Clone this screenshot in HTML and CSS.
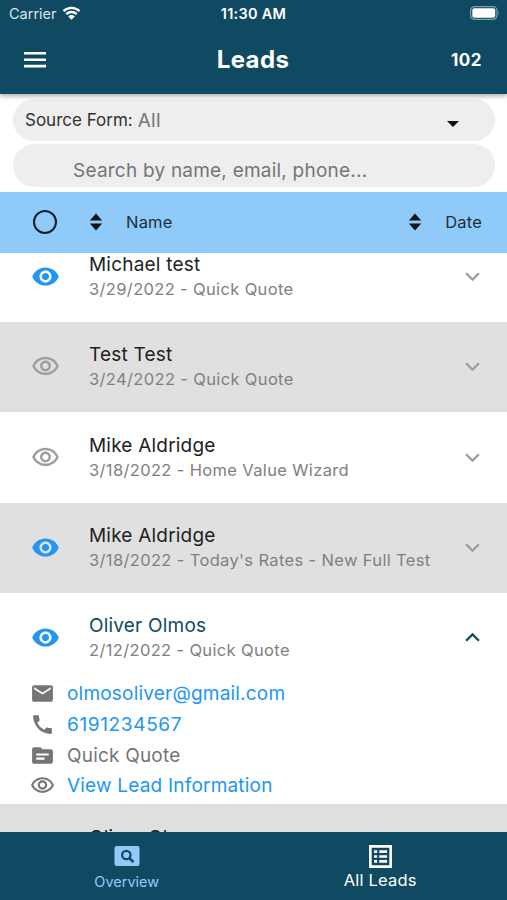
FILE: index.html
```html
<!DOCTYPE html>
<html lang="en">
<head>
    <meta charset="UTF-8">
    <meta name="viewport" content="width=device-width, initial-scale=1.0">
    <title>Leads</title>
    <link rel="stylesheet" href="styles.css">
</head>
<body>
    <!-- shared icon shapes -->
    <svg class="sprite" width="0" height="0">
        <symbol id="eye" viewBox="0 0 24 24"><path d="M12 4.5C7 4.5 2.73 7.61 1 12c1.73 4.39 6 7.5 11 7.5s9.27-3.11 11-7.5c-1.73-4.39-6-7.5-11-7.5zM12 17c-2.76 0-5-2.24-5-5s2.24-5 5-5 5 2.24 5 5-2.24 5-5 5zm0-8c-1.66 0-3 1.34-3 3s1.34 3 3 3 3-1.34 3-3-1.34-3-3-3z"/></symbol>
        <symbol id="eye-outline" viewBox="0 0 24 24"><path d="M12 6c3.79 0 7.17 2.13 8.82 5.5C19.17 14.87 15.79 17 12 17s-7.17-2.13-8.82-5.5C4.83 8.13 8.21 6 12 6m0-2C7 4 2.73 7.11 1 11.5 2.73 15.89 7 19 12 19s9.27-3.11 11-7.5C21.27 7.11 17 4 12 4zm0 5c1.38 0 2.5 1.12 2.5 2.5S13.38 14 12 14s-2.5-1.12-2.5-2.5S10.62 9 12 9m0-2c-2.48 0-4.5 2.02-4.5 4.5S9.52 16 12 16s4.5-2.02 4.5-4.5S14.48 7 12 7z"/></symbol>
        <symbol id="more" viewBox="0 0 24 24"><path d="M16.59 8.59L12 13.17 7.41 8.59 6 10l6 6 6-6z"/></symbol>
        <symbol id="less" viewBox="0 0 24 24"><path d="M12 8l-6 6 1.41 1.41L12 10.83l4.59 4.58L18 14z"/></symbol>
        <symbol id="sort" viewBox="0 0 14 18"><path d="M7 .5L13.2 7.6H.8zM.8 10.4h12.4L7 17.5z"/></symbol>
    </svg>

    <div class="app">
        <header class="header">
            <div class="status-bar">
                <div class="carrier">
                    <span>Carrier</span>
                    <svg class="wifi" viewBox="0 0 18 14"><path d="M1 5.2a11.5 11.5 0 0 1 16 0M3.8 8.1a7.5 7.5 0 0 1 10.4 0" fill="none" stroke="#fff" stroke-width="2.3"/><path d="M9 13.8L5.7 10.4a4.7 4.7 0 0 1 6.6 0z" fill="#fff"/></svg>
                </div>
                <span class="time">11:30 AM</span>
                <svg class="battery" viewBox="0 0 30 14"><rect x=".6" y=".6" width="26.3" height="12.8" rx="4" fill="none" stroke="#7f9fae" stroke-width="1.2"/><rect x="2.3" y="2.3" width="22.9" height="9.4" rx="2" fill="#fff"/><path d="M28.2 4.6q1.6 2.4 0 4.8z" fill="#7f9fae"/></svg>
            </div>
            <div class="title-bar">
                <svg class="menu" viewBox="0 0 22 16"><path d="M0 0h22v2.6H0zM0 6.4h22V9H0zM0 12.8h22v2.6H0z"/></svg>
                <h1>Leads</h1>
                <span class="count">102</span>
            </div>
        </header>

        <div class="filters">
            <div class="pill source">
                <span class="source-label">Source Form:</span>
                <span class="source-value">All</span>
                <svg class="caret" viewBox="0 0 12 6"><path d="M0 0h12L6 6z"/></svg>
            </div>
            <div class="pill search">Search by name, email, phone...</div>
        </div>

        <div class="columns">
            <span class="select-all"></span>
            <svg class="sort"><use href="#sort"/></svg>
            <span class="col-name">Name</span>
            <svg class="sort"><use href="#sort"/></svg>
            <span class="col-date">Date</span>
        </div>

        <main class="list">
            <div class="lead first">
                <svg class="eye seen"><use href="#eye"/></svg>
                <div class="info">
                    <div class="name">Michael test</div>
                    <div class="meta">3/29/2022 - Quick Quote</div>
                </div>
                <svg class="chevron"><use href="#more"/></svg>
            </div>
            <div class="lead alt">
                <svg class="eye"><use href="#eye-outline"/></svg>
                <div class="info">
                    <div class="name">Test Test</div>
                    <div class="meta">3/24/2022 - Quick Quote</div>
                </div>
                <svg class="chevron"><use href="#more"/></svg>
            </div>
            <div class="lead">
                <svg class="eye"><use href="#eye-outline"/></svg>
                <div class="info">
                    <div class="name">Mike Aldridge</div>
                    <div class="meta">3/18/2022 - Home Value Wizard</div>
                </div>
                <svg class="chevron"><use href="#more"/></svg>
            </div>
            <div class="lead alt">
                <svg class="eye seen"><use href="#eye"/></svg>
                <div class="info">
                    <div class="name">Mike Aldridge</div>
                    <div class="meta">3/18/2022 - Today's Rates - New Full Test</div>
                </div>
                <svg class="chevron"><use href="#more"/></svg>
            </div>
            <div class="lead open">
                <svg class="eye seen"><use href="#eye"/></svg>
                <div class="info">
                    <div class="name">Oliver Olmos</div>
                    <div class="meta">2/12/2022 - Quick Quote</div>
                </div>
                <svg class="chevron"><use href="#less"/></svg>
            </div>
            <div class="details">
                <div class="detail">
                    <svg viewBox="0 0 24 24"><path d="M20 4H4c-1.1 0-1.99.9-1.99 2L2 18c0 1.1.9 2 2 2h16c1.1 0 2-.9 2-2V6c0-1.1-.9-2-2-2zm0 4l-8 5-8-5V6l8 5 8-5v2z"/></svg>
                    <a class="link">olmosoliver@gmail.com</a>
                </div>
                <div class="detail">
                    <svg viewBox="0 0 24 24"><path d="M20.01 15.38c-1.23 0-2.42-.2-3.53-.56-.35-.12-.74-.03-1.01.24l-1.57 1.97c-2.83-1.35-5.48-3.9-6.89-6.83l1.95-1.66c.27-.28.35-.67.24-1.02-.37-1.11-.56-2.3-.56-3.53 0-.54-.45-.99-.99-.99H4.19C3.65 3 3 3.24 3 3.99 3 13.28 10.73 21 20.01 21c.71 0 .99-.63.99-1.18v-3.45c0-.54-.45-.99-.99-.99z"/></svg>
                    <a class="link phone">6191234567</a>
                </div>
                <div class="detail">
                    <svg viewBox="0 0 24 24"><path d="M20 6h-8l-2-2H4c-1.1 0-1.99.9-1.99 2L2 18c0 1.1.9 2 2 2h16c1.1 0 2-.9 2-2V8c0-1.1-.9-2-2-2zm-6 10H6v-2h8v2zm4-4H6v-2h12v2z"/></svg>
                    <span>Quick Quote</span>
                </div>
                <div class="detail">
                    <svg><use href="#eye-outline"/></svg>
                    <a class="link">View Lead Information</a>
                </div>
            </div>
            <div class="lead alt">
                <svg class="eye"><use href="#eye-outline"/></svg>
                <div class="info">
                    <div class="name">Oliver Olmos</div>
                    <div class="meta"></div>
                </div>
            </div>
        </main>

        <nav class="tabs">
            <div class="tab overview">
                <svg viewBox="0 0 26 22"><rect x=".5" y="1" width="25" height="20" rx="2" fill="#90caf9"/><circle cx="12.3" cy="10" r="4.2" fill="none" stroke="#104a62" stroke-width="2.2"/><path d="M15.3 13l4.2 4.2" stroke="#104a62" stroke-width="2.6"/></svg>
                <span>Overview</span>
            </div>
            <div class="tab all">
                <svg viewBox="0 0 24 24"><path d="M1 1h22v22H1zM3.5 3.5v17h17v-17z" fill-rule="evenodd"/><path d="M5.8 6h3v2.6h-3zM10.8 6h7.5v2.6h-7.5zM5.8 10.7h3v2.6h-3zM10.8 10.7h7.5v2.6h-7.5zM5.8 15.4h3V18h-3zM10.8 15.4h7.5V18h-7.5z"/></svg>
                <span>All Leads</span>
            </div>
        </nav>
    </div>
</body>
</html>
```

FILE: styles.css
```css
body {
    margin: 0;
    font-family: Inter, "Liberation Sans", sans-serif;
    background-color: #fff;
}

svg {
    display: block;
    flex-shrink: 0;
}

.sprite {
    display: none;
}

.app {
    display: flex;
    flex-direction: column;
    height: 900px;
    overflow: hidden;
    white-space: nowrap;
}

.header {
    flex: none;
    height: 93.5px;
    background-color: #104a62;
    color: #fff;
    box-shadow: 0 2px 5px rgba(0, 0, 0, 0.35);
    z-index: 1;
}

.status-bar {
    display: grid;
    grid-template-columns: 1fr auto 1fr;
    align-items: center;
    height: 27px;
    padding: 0 7px 0 9px;
    font-size: 14.5px;
}

.carrier {
    display: flex;
    align-items: center;
    gap: 5px;
    color: #dbe4e8;
}

.wifi {
    width: 19px;
    height: 14px;
    margin-top: -2px;
}

.time {
    font-weight: 600;
    font-size: 14.5px;
    letter-spacing: 0.25px;
    margin-left: -2px;
}

.battery {
    width: 30px;
    height: 14px;
    margin-top: -1px;
    justify-self: end;
}

.title-bar {
    display: grid;
    grid-template-columns: 1fr auto 1fr;
    align-items: center;
    height: 65px;
    padding: 0 25px 0 24px;
}

.menu {
    width: 22px;
    height: 16px;
    margin-top: 1px;
    fill: #fff;
}

h1 {
    margin: 0;
    font-size: 24px;
    font-weight: 700;
    letter-spacing: 0.4px;
}

.count {
    justify-self: end;
    font-size: 17px;
    font-weight: 700;
    letter-spacing: 0.5px;
}

.filters {
    flex: none;
    display: flex;
    flex-direction: column;
    gap: 3px;
    height: 93px;
    padding: 5px 12px 0 13px;
}

.pill {
    display: flex;
    align-items: center;
    height: 42.5px;
    border-radius: 22px;
    background-color: #eee;
    box-sizing: border-box;
}

.source {
    padding: 0 36px 0 12px;
}

.source-label {
    font-size: 17px;
    color: #333;
}

.source-value {
    margin-left: 5px;
    padding-top: 1px;
    font-size: 19px;
    letter-spacing: 0.3px;
    color: #757575;
}

.caret {
    width: 12px;
    height: 6px;
    margin: 8px 0 0 auto;
    fill: #111;
}

.search {
    padding: 10px 0 0 60px;
    font-size: 19px;
    letter-spacing: 0.22px;
    color: #757575;
}

.columns {
    flex: none;
    display: flex;
    align-items: center;
    height: 61px;
    padding: 0 25px 0 33px;
    background-color: #90caf9;
    font-size: 16.5px;
    letter-spacing: 0.2px;
    color: #1b2f3d;
    box-sizing: border-box;
}

.select-all {
    width: 20px;
    height: 20px;
    border: 2.5px solid #10202b;
    border-radius: 50%;
}

.sort {
    width: 14px;
    height: 18px;
    fill: #10171d;
}

.select-all + .sort {
    margin-left: 32px;
}

.col-name {
    margin-left: 23px;
    margin-right: auto;
}

.col-date {
    margin-left: 23px;
}

.list {
    flex: 1;
    min-height: 0;
    overflow: hidden;
}

.lead {
    display: flex;
    align-items: center;
    height: 90.6px;
    padding: 0 20px 0 30.5px;
    box-sizing: border-box;
}

.first {
    margin-top: -21.6px;
}

.alt {
    background-color: #e0e0e0;
}

.eye {
    width: 29px;
    height: 29px;
    fill: #9e9e9e;
}

.seen {
    fill: #2196f3;
}

.info {
    flex: 1;
    margin-left: 29.5px;
    padding-top: 1px;
}

.name {
    height: 25px;
    line-height: 25px;
    font-size: 19px;
    letter-spacing: 0.2px;
    color: #222;
}

.meta {
    height: 25px;
    line-height: 25px;
    font-size: 16.5px;
    letter-spacing: 0.35px;
    color: #808080;
}

.chevron {
    width: 29px;
    height: 29px;
    fill: #9e9e9e;
}

.open {
    height: 85px;
    padding-top: 4px;
}

.open .name {
    color: #104a62;
}

.open .chevron {
    fill: #104a62;
}

.details {
    height: 126px;
    padding-left: 30px;
}

.detail {
    display: flex;
    align-items: center;
    gap: 12px;
    height: 30.7px;
    font-size: 19px;
    letter-spacing: 0.2px;
    color: #757575;
}

.detail svg {
    width: 25px;
    height: 25px;
    fill: #757575;
}

.link {
    color: #2196f3;
}

.phone {
    letter-spacing: 0.65px;
}

.tabs {
    flex: none;
    display: grid;
    grid-template-columns: 1fr 1fr;
    height: 68.5px;
    background-color: #104a62;
}

.tab {
    display: flex;
    flex-direction: column;
    align-items: center;
    padding-top: 13px;
}

.tab svg {
    width: 26px;
    height: 22px;
}

.overview {
    color: #90caf9;
    font-size: 14.5px;
}

.overview span {
    margin-top: 6px;
}

.all {
    padding-top: 12px;
    color: #fff;
    font-size: 16.5px;
    letter-spacing: 0.2px;
}

.all svg {
    width: 25px;
    height: 25px;
    fill: #fff;
}

.all span {
    margin-top: 1px;
}
```
